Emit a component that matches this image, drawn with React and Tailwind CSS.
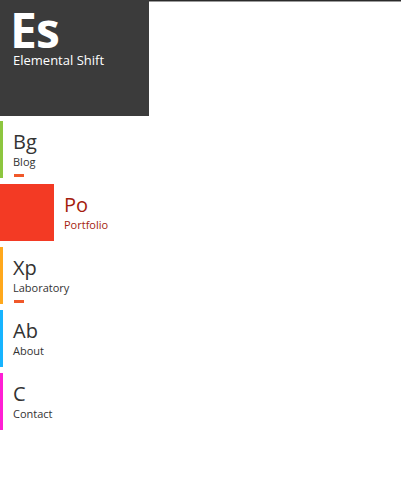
import React from "react";

const items = [
  { abbr: "Bg", label: "Blog", border: "border-[#8dc63f]", mark: true },
  { abbr: "Po", label: "Portfolio", border: "border-[#f33a24]", active: true },
  { abbr: "Xp", label: "Laboratory", border: "border-[#ffa81c]", mark: true },
  { abbr: "Ab", label: "About", border: "border-[#17b4ff]" },
  { abbr: "C", label: "Contact", border: "border-[#ff1fd4]" },
];

export default function App() {
  return (
    <div
      className="min-h-screen bg-white"
      style={{ fontFamily: '"Open Sans", "Noto Sans", sans-serif' }}
    >
      <div className="border-t border-[#2a2a2a]">
        <div className="h-px bg-[#9a9a9a]" />
      </div>
      <div className="-mt-[2px] w-[149px]">
        <header className="h-[116px] bg-[#3b3b3b] px-[13px] pt-[8px] text-white">
          <div className="-ml-[3px] text-[48px] font-bold leading-[44px] tracking-[-1px]">Es</div>
          <div className="text-[13px] leading-[16px]">Elemental Shift</div>
        </header>

        <nav className="mt-[5px] flex flex-col gap-[6px]">
          {items.map((item) =>
            item.active ? (
              <a key={item.label} href="#" className="flex h-[57px]">
                <span className="w-[54px] bg-[#f33a24]" />
                <span className="pl-[10px] pt-[9px] text-[#a51c0e]">
                  <span className="block text-[20px] leading-[24px]">{item.abbr}</span>
                  <span className="block text-[11px] leading-[15px]">{item.label}</span>
                </span>
              </a>
            ) : (
              <a
                key={item.label}
                href="#"
                className={`block h-[57px] border-l-[3px] ${item.border} pl-[10px] pt-[9px] text-[#333]`}
              >
                <span className="block text-[20px] leading-[24px]">{item.abbr}</span>
                <span className="block text-[11px] leading-[15px]">{item.label}</span>
                {item.mark && <span className="ml-px mt-[5px] block h-[3px] w-[10px] bg-[#f0582a]" />}
              </a>
            )
          )}
        </nav>
      </div>
    </div>
  );
}
